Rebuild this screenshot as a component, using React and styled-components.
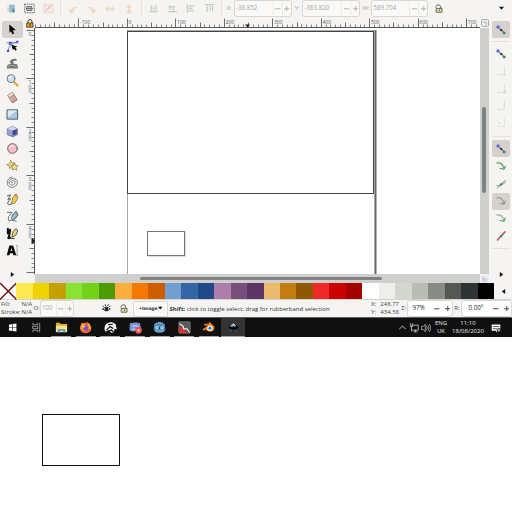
import React from 'react';
import styled, { createGlobalStyle } from 'styled-components';

const Global = createGlobalStyle`
  *{box-sizing:border-box}
  html,body{margin:0;background:#fff;overflow:hidden}
  svg{display:block;flex:none}
`;
const Screen = styled.div`width:512px;height:512px;background:#fff;overflow:hidden;font-family:"Open Sans","Noto Sans",sans-serif;color:#41484c;font-size:6px;line-height:1;`;
const Window = styled.div`height:318px;background:#f5f4f2;display:flex;flex-direction:column;border-bottom:1px solid #5b5f5c;`;
const Toolbar = styled.div`height:18px;flex:none;display:flex;align-items:flex-start;padding:0 2px 0 2px;color:#a5a6a4;`;
const ToolSlot = styled.div`width:18.5px;height:17px;display:grid;place-items:center;opacity:${p => p.$dim || 1};`;
const Divider = styled.div`width:1px;height:17px;margin:0 ${p => p.$gap || 2.8}px;background:#e5e3e0;flex:none;`;
const FieldLabel = styled.span`width:${p => p.$w}px;height:17px;line-height:17px;text-align:center;flex:none;`;
const NumberField = styled.div`width:${p => p.$w}px;height:17px;display:flex;align-items:center;border:1px solid #d9d7d4;border-radius:3px;background:${p => p.$bg || '#faf9f8'};color:${p => p.$ink || '#a5a6a4'};padding-left:${p => p.$pad || 1}px;flex:none;`;
const Value = styled.span`flex:1;white-space:nowrap;font-size:6.2px;`;
const Step = styled.span`width:${p => p.$w || 8}px;height:13px;display:grid;place-items:center;flex:none;border-left:1px solid ${p => p.$rule || '#eceae8'};`;
const Spacer = styled.div`flex:1;`;
const Main = styled.div`height:265px;flex:none;display:grid;grid-template-columns:25px 10px 445px 9px 23px;grid-template-rows:10px 246px 9px;`;
const Toolbox = styled.div`grid-row:1 / 4;display:flex;flex-direction:column;align-items:center;padding-top:3px;`;
const Tool = styled.div`width:21px;height:17px;display:grid;place-items:center;border-radius:2px;background:${p => p.$on ? '#d6d1cd' : 'transparent'};flex:none;`;
const Corner = styled.div`display:grid;place-items:center;`;
const Ruler = styled.div`overflow:hidden;`;
const VRuler = styled.div`grid-column:2;grid-row:2 / 4;overflow:hidden;`;
const Canvas = styled.div`grid-column:3;grid-row:2;position:relative;background:#fff;overflow:hidden;`;
const Shape = styled.div`position:absolute;left:${p => p.$x}px;top:${p => p.$y}px;width:${p => p.$w}px;height:${p => p.$h}px;border:1px solid ${p => p.$c};box-shadow:${p => p.$soft ? '1px 1px 0 #ddd' : 'none'};`;
const PageSheet = styled.div`position:absolute;left:92px;top:2px;width:248px;bottom:0;border:solid #aaa;border-width:1px 1px 0 1px;box-shadow:1px 0 0 #666,2px 0 0 #b4b4b4;`;
const HScroll = styled.div`grid-column:3;grid-row:3;background:#cfcfce;padding:3px 0 0 104.5px;`;
const HThumb = styled.div`width:242px;height:3px;border-radius:2px;background:#7e8280;`;
const VScroll = styled.div`grid-column:4;grid-row:2;background:#cfcfce;padding:79px 0 0 2px;`;
const VThumb = styled.div`width:4px;height:86px;border-radius:2px;background:#7e8280;`;
const SnapBar = styled.div`grid-column:5;grid-row:1 / 4;display:flex;flex-direction:column;align-items:center;padding:3px 0 0 1px;`;
const Snap = styled.div`width:18px;height:17px;display:grid;place-items:center;border-radius:2px;flex:none;background:${p => p.$on ? '#d6d1cd' : 'transparent'};opacity:${p => p.$dim ? .25 : 1};margin-bottom:.4px;`;
const SnapRule = styled.div`width:18px;height:1px;margin:${p => p.$m};background:#e3e0dd;flex:none;`;
const Palette = styled.div`height:17px;flex:none;display:flex;border-bottom:1px solid #d4d3d0;`;
const Swatch = styled.div`width:16.47px;flex:none;background:${p => p.$c};`;
const PaletteMenu = styled.div`flex:1;display:grid;place-items:center;background:#f5f4f2;`;
const Status = styled.div`height:17px;flex:none;display:flex;align-items:center;`;
const Pair = styled.div`width:${p => p.$w}px;height:17px;flex:none;display:grid;grid-template-columns:auto auto;justify-content:space-between;align-content:center;row-gap:1.5px;line-height:7px;padding:0 1px;`;
const Layer = styled.div`width:35px;height:16px;margin-right:1px;border:1px solid #dad8d5;border-radius:2px;background:#faf9f8;display:flex;align-items:center;justify-content:space-between;padding:0 5px;color:#333;font:bold 4.5px "DejaVu Sans",sans-serif;flex:none;`;
const Hint = styled.div`width:201px;flex:none;padding-left:.5px;white-space:nowrap;font-size:6px;color:#30363a;`;
const IconSlot = styled.div`width:18px;height:17px;display:grid;place-items:center;flex:none;`;
const LockSlot = styled(IconSlot)`width:21px;`;
const Taskbar = styled.div`height:19px;background:#101010;display:flex;color:#e8e8e8;`;
const Task = styled.div`width:24.55px;height:19px;display:grid;place-items:center;flex:none;background:${p => p.$open ? 'linear-gradient(#a3a3a3,#a3a3a3) center bottom / ' + (p.$active ? '24px' : '20px') + ' 1px no-repeat' : 'none'} ${p => p.$active ? '#333' : ''};`;
const Tray = styled.div`width:${p => p.$w}px;display:flex;flex-direction:column;align-items:center;justify-content:center;flex:none;gap:1.4px;font-size:6px;line-height:7px;white-space:nowrap;`;
const Notifications = styled.div`width:26px;display:flex;align-items:center;padding-left:4.5px;flex:none;`;
const Below = styled.div`height:175px;padding:77px 0 0 42px;background:#fff;`;
const Outline = styled.div`width:78px;height:52px;border:1px solid #111;`;

const Svg = ({ w = 14, h = 14, vb = '0 0 14 14', children }) => (
  <svg width={w} height={h} viewBox={vb} fill="none" strokeLinecap="round" strokeLinejoin="round">{children}</svg>
);
const Plus = ({ minus }) => <Svg w={5.5} h={5.5} vb="0 0 6 6"><path d={minus ? 'M.5 3h5' : 'M.5 3h5M3 .5v5'} stroke="currentColor" strokeWidth=".9" /></Svg>;
const Caret = ({ d = 'M0 1h6L3 4.5z', w = 5 }) => <Svg w={w} h={w} vb="0 0 6 6"><path d={d} fill="#111" /></Svg>;
const Padlock = () => <Svg w={8} h={9} vb="0 0 8 9"><path d="M2 4V2.6a2 2 0 0 1 4 0V4" stroke="#333" strokeWidth="1" /><rect x="1" y="4" width="6" height="4.2" fill="#f0a31b" stroke="#332e20" strokeWidth=".8" /><path d="M4 5.3v1.5" stroke="#332e20" /></Svg>;
const OpenPadlock = () => <Svg w={8} h={9} vb="0 0 8 9"><path d="M1 3.2V2.6Q1.2.8 3.3.8T5.8 3v1.4" stroke="#555" strokeWidth=".9" /><rect x="1.6" y="4.4" width="5.4" height="3.8" fill="#e6dfae" stroke="#4b4938" strokeWidth=".8" /><path d="M4.3 5.7v1" stroke="#4b4938" strokeWidth=".8" /></Svg>;

function Stepper({ value, $step, $rule, ...field }) {
  return <NumberField {...field}><Value>{value}</Value><Step $w={$step} $rule={$rule}><Plus minus /></Step><Step $w={$step} $rule={$rule}><Plus /></Step></NumberField>;
}

function Horizontal() {
  const ticks = [];
  for (let i = -19; i < 75; i++) {
    const x = Math.round(91.9 + i * 4.846) + .5;
    const len = i % 10 === 0 ? 9 : i % 5 === 0 ? 5 : 3;
    ticks.push(<path key={i} d={`M${x} ${9.5 - len}V9`} stroke={i % 5 ? '#898b8a' : '#6b6e6d'} strokeWidth="1" />);
  }
  return <svg width="445" height="10" viewBox="0 0 445 10">{ticks}<path d="M0 9.5h445" stroke="#55595a" />
    {[-100, 0, 100, 200, 300, 400, 500, 600, 700].map(n => <text key={n} x={93.6 + n * .4846} y="5.8" fontSize="5" fill="#555b5d" fontFamily="Open Sans">{n}</text>)}
    <path d="M210 6.5h5l-2.5 3z" fill="#222" /></svg>;
}
function Vertical() {
  const ticks = [];
  for (let i = 0; i < 51; i++) {
    const y = Math.round(2 + i * 4.846) + .5;
    const len = i % 10 === 0 ? 8 : i % 5 === 0 ? 5 : 3;
    ticks.push(<path key={i} d={`M${9.5 - len} ${y}H10`} stroke={i % 5 ? '#898b8a' : '#6b6e6d'} />);
  }
  return <svg width="10" height="255" viewBox="0 0 10 255">{ticks}<path d="M9.5 0v246" stroke="#55595a" />
    {['0', '100', '200', '300', '400'].map((s, i) => <text key={s} x={[...s].map(() => 3.6).join(' ')} y={[...s].map((_, j) => 8 + i * 48.46 + j * 4.2).join(' ')} fontSize="5" fill="#555b5d" fontFamily="Open Sans">{s}</text>)}
    <path d="M7 210.5v5l3-2.5z" fill="#222" stroke="#222" /></svg>;
}

const tools = [
  <path d="M3.5 1.5l7 6-3.3.5 1.6 3.2-1.9.9-1.5-3.2-1.6 1.6z" fill="#050505" />,
  <><path d="M2 12Q3 4 12 2M1 3h11" stroke="#7580b6" /><path d="M3 2h3v3H3zM1 10.5h2.5V13H1zM11 .8h2.3v2.3H11z" fill="#4a50f4" /><path d="M5.8 5l6.5 2-2.4 1.2 1.8 2-1.6 1.3-1.5-2.2-1.3 1.6z" fill="#080808" /></>,
  <><path d="M1 12.5V9.5q1-2 4-2L4.7 5.5 4 4.5Q6 1 10.8 2l1 2.4-3-.6-1 1.2.4 2.4q4-.5 4.6 2v3.1z" fill="#73756f" /><path d="M2 10q5-2 9.5 0" stroke="#b5b6b2" /></>,
  <><path d="M8.8 8.8l3.7 3.7" stroke="#eda229" strokeWidth="2.3" /><circle cx="5.3" cy="5" r="4.2" fill="#cae2f1" stroke="#6c7275" /><path d="M3.2 4.5q.6-2 2.6-1.8" stroke="#fff" /></>,
  <><path d="M2.2 4.5l4.8-3 5 8-4.8 3z" fill="#c89787" stroke="#754b42" strokeWidth=".8" /><path d="M2.2 4.5l4.8-3 1.3 2-4.9 3z" fill="#eee0d9" /><path d="M5.3 7.5l1.8 2.8M8 5.5l2 3" stroke="#eed0bf" /></>,
  <><rect x="1.5" y="2" width="11" height="10" fill="#a9c7df" stroke="#455564" /><path d="M2.2 2.7h9.6L2.2 10z" fill="#dbeaf4" /></>,
  <><path d="M1.7 4L7 1.5 12.3 4v6.3l-4.8 2.5L1.7 10.5z" fill="#9ba2da" stroke="#646993" strokeWidth=".8" /><path d="M7 5.5l4.6-1.3v5.5L7 11.5z" fill="#43488e" /><path d="M2 4l5-2.3L12 4 7 5.8z" fill="#d9dbed" /></>,
  <><circle cx="7" cy="7" r="5.2" fill="#f7bdca" stroke="#67545a" /><path d="M4.2 5.5Q6 3.3 8 3.8" stroke="#fff" /></>,
  <><path d="M5.2 1.6l1 2.8 3-.4-2 2.3 1.6 2.8-3-.8-2 2.2-.3-3L.8 6.2l2.9-1.1z" fill="#f1e18b" stroke="#847437" strokeWidth=".7" /><path d="M9.5 4.6l.9 2.4 2.7.4-2 1.7.3 3-2.4-1.4-2.6 1.2.6-2.8L5.4 7l2.8-.3z" fill="#f1e18b" stroke="#847437" strokeWidth=".7" /></>,
  <path d="M7.2 7.3q-1.8.5-1.6-1.2c.6-2.5 4-1.7 4 .8 0 4-6.3 4-6.3-.3 0-5.3 8.9-5.5 8.9.5 0 6.5-10.9 7.3-10.9 0 0-3.2 2.2-5.3 5.1-6" stroke="#686969" strokeWidth=".9" />,
  <><path d="M1.5 3L5 2 2 7l3-1-3 4c-1 4 3 3 5 1" stroke="#555" /><path d="M5.8 11l2-7 3-3 2 4.5-3 5z" fill="#f6cb4b" stroke="#68522b" strokeWidth=".7" /><path d="M9 3.3l2-2.1 1.6 3z" fill="#ee7130" /></>,
  <><path d="M1.5 2.5h5L3 7Q1 13 6 11l5 1" stroke="#5e6467" /><path d="M5.8 10L7 5l4-3.7 2 4-3 4z" fill="#7db0cf" stroke="#364a57" strokeWidth=".8" /><path d="M6 10l4-5" stroke="#efd6a3" /></>,
  <><path d="M2 2v5l2.5-4-1 6-1 3 2-.5" stroke="#111" strokeWidth="2.2" /><path d="M5 12.3h4" stroke="#333" /><path d="M6.5 10.5l1-5.5 3-3 2.2 2.2-2 4.5z" fill="#efce76" stroke="#353126" strokeWidth=".8" /><path d="M9.3 3.2L11 1.2l2 2.6z" fill="#4889b4" /></>,
  <><path fillRule="evenodd" d="M3.6 1.6h4.1l3.4 10.6H7.9l-.6-2.2H4.3l-.6 2.2H.8zM5 7.6h1.8L5.8 4z" fill="#090909" /><path d="M12 2.2v9.5M11.3 1.7h1.4M11.3 12.2h1.4" stroke="#888" strokeWidth=".7" /></>,
];
const Nodes = () => <Svg w={12} h={12} vb="0 0 14 14"><path d="M4 4l7 6.5" stroke="#777" strokeWidth="1.2" /><rect x="1.8" y="1.8" width="3.4" height="3.4" rx=".8" fill="#5f63e6" /><rect x="6.2" y="6" width="2.2" height="2.2" fill="#222" /><rect x="9" y="9" width="3.3" height="3.1" rx=".8" fill="#408b60" /></Svg>;
const Bracket = ({ d }) => <Svg w={12} h={12}><path d="M11 2v9H3" stroke="#8c9991" /><path d={d} stroke="#4ba375" strokeWidth="2.3" /></Svg>;
const Curve = ({ c, head = '#46965c' }) => <Svg w={12} h={12}><path d="M2 3.5q7-1 8 6" stroke={c} strokeWidth="1.3" /><path d="M6 10l4.4.8 1.6-3.6" stroke={head} strokeWidth="1.3" /></Svg>;
const Cross = () => <Svg w={12} h={12}><path d="M3 11.5L12 3" stroke="#aaa" strokeWidth="1.5" /><path d="M2 8.5l4 .5 6-3.5" stroke="#91a496" /><path d="M6.4 8l1.2-1" stroke="#318354" strokeWidth="2.2" /></Svg>;
const RedLine = () => <Svg w={12} h={12}><path d="M3 11.5l2-2.2M9.2 4.8l2.3-2.5" stroke="#d9545a" strokeWidth="2" /><path d="M5 9.3l4.2-4.5" stroke="#777" strokeWidth="1.2" /><path d="M6.6 7.7l1-1.1" stroke="#318354" strokeWidth="2.4" /></Svg>;

const colors = 'fce94f edd400 c4a000 8ae234 73d216 4e9a06 fcaf3e f57900 ce5c00 729fcf 3465a4 204a87 ad7fa8 75507b 5c3566 e9b96e c17d11 8f5902 ef2929 cc0000 a40000 ffffff eeeeec d3d7cf babdb6 888a85 555753 2e3436 000000'.split(' ');

const apps = [
  <path d="M2.5 3.4l4-.7v4H2.5zM7.2 2.6l4.8-.7v4.8H7.2zM2.5 7.4h4v4l-4-.7zM7.2 7.4H12v4.8l-4.8-.7z" fill="#fff" />,
  <path d="M2.5 1.5v2h6v-2M2.5 12.5v-2h6v2M2.5 5.5h6v3h-6zM11 1.5v2M11 6v6.5M10.5 4.8h1" stroke="#bbb" strokeWidth=".9" />,
  <><path d="M1 2h4.3l1 1.2h6.7v9H1z" fill="#e7a923" /><path d="M1 5h12v6.8H1z" fill="#ffe08a" /><path d="M3 12.5V8.8h8v3.7H9.2V10.5H4.8v2z" fill="#3298df" /></>,
  <><circle cx="7" cy="7.4" r="5.9" fill="#f45435" /><path d="M3 2L1.4 7q0 5.6 5.9 5.6T13.2 7Q12.2 2.6 8.5.8L10 5z" fill="#ff9d27" /><circle cx="7.2" cy="7.5" r="2.9" fill="#7650d8" /><path d="M3 5l3-.4 1 1-2.3 2z" fill="#f3cf44" /><path d="M1.8 9q4 6 10 .5-2 1.5-5 .9" stroke="#ef3355" /></>,
  <><path d="M.5 9Q.5 3 5 2l3-.8 4.4 2L13.8 9l-2.4-.3-1 4H8l-3-3-3.4 2z" fill="#f0f0f0" /><path d="M3 9.5L6.5 6l3 1.8M4 12l4-2.5L10 12M5 4l4-.5" stroke="#151515" strokeWidth="1.3" /></>,
  <><path d="M1 2.5Q7 .5 11.9 2.5l1.2 7.5L9 11.5 7 10.2l-2.5 1.5L.5 10z" fill="#7b8ed6" /><path d="M4 5.5q3-1 5.5 0M4 8.7q2.5 1 4 0" stroke="#e6ebff" /><circle cx="10.2" cy="10" r="3.6" fill="#e95454" /><circle cx="10.2" cy="10" r="1.2" fill="#fff" /></>,
  <><path d="M1.2 4l2.4-2 1.7 1L6 1h2l.7 2 1.7-1 2.4 2 .5 5.5q-1.2 3.4-6.3 3.4T.8 9.5z" fill="#468bbb" /><path d="M2 4l2-2 1.5 1L6 1.5h2L8.5 3 10 2l2 2" stroke="#8ac1e1" strokeDasharray="1 1" /><circle cx="4.3" cy="7.2" r="1.6" fill="#e6f0f5" /><circle cx="9.7" cy="7.2" r="1.6" fill="#e6f0f5" /><path d="M4.4 7.2h.1M9.6 7.2h.1M7 7v1.4" stroke="#26383e" strokeWidth="1.2" /><path d="M3 10.5h8" stroke="#b9d6e7" strokeWidth=".7" /></>,
  <><rect x=".8" y=".8" width="12.4" height="12.4" rx="1" fill="#565b5c" stroke="#888" strokeWidth=".6" /><path d="M1.5 6l5 3 1.4 3.8H1.5z" fill="#ed302e" /><path d="M2 3.3l3.3 2 .7 3 4 .5 2 3.5" stroke="#f6f6f6" strokeWidth="1.3" /><path d="M9.5 9.8l2 2.8" stroke="#e12929" /></>,
  <><path d="M.5 9.2l5.8-4.4H2.5V3h5.2L7 1.8l1.2-.6 4.3 3.9q2.2 3.5-1.1 5.6-3.2 1.7-6.6-.5L4 9 2 10.4z" fill="#ef8418" /><circle cx="8.5" cy="7.8" r="2.9" fill="#eee" /><circle cx="8.5" cy="7.8" r="1.5" fill="#236eae" /></>,
  <><path d="M7 1L.8 7l1.9 1.7 2 .1-.2 1.6L7 13l2-1.9-.7-1.4 2.8-.5L13.2 7z" fill="#07090a" stroke="#576068" strokeWidth=".5" /><path d="M7 2L3 6l1.4-.3.8 1L7 5l1 1.2 2-.8z" fill="#a9bac9" /><path d="M4 11q3-2 5.5.2" stroke="#3a6281" /></>,
];
const align = ['M2 11h10M4 9V3M7 9V5M10 9V3', 'M2 11h10M4 8V3M2 5h8M8 10V5', 'M3 2v10M5 4h6M5 7h4M5 10h6', 'M2 2h10M4 4v7M8 4v5M11 4v6'];
const turns = ['M5 12q-2-6 6-7M2 8l3 4 3-3', 'M9 12q2-6-6-7M12 8l-3 4-3-3', 'M1.5 7h11M4 4.5L1.5 7 4 9.5M10 4.5L12.5 7 10 9.5', 'M7 1.5v11M4.5 4L7 1.5 9.5 4M4.5 10L7 12.5 9.5 10'];

export default function App() {
  return <><Global /><Screen>
    <Window>
      <Toolbar>
        <ToolSlot $dim={.75}><Svg w={11} h={11}><path d="M4 2h7v10H4z" fill="#73a9cf" /><path d="M2 4h6M2 7h6M2 10h6" stroke="#aaa" /><path d="M8 7h3v5H8z" fill="#356f9b" /></Svg></ToolSlot>
        <ToolSlot><Svg w={11} h={11}><rect x="1" y="1.5" width="12" height="11" stroke="#4b4b4b" strokeDasharray="1 1.8" /><rect x="4" y="4.5" width="6" height="5" fill="#bbb" stroke="#555" /><path d="M3 7h8" stroke="#666" /></Svg></ToolSlot>
        <ToolSlot $dim={.35}><Svg w={11} h={11}><rect x="1" y="1.5" width="12" height="11" stroke="#888" strokeDasharray="1 1.8" /><path d="M3 11l8-8" stroke="#d56" strokeWidth="1.4" /><circle cx="5" cy="5" r="2.5" stroke="#e65" /><circle cx="9" cy="9" r="2.5" stroke="#da5" /></Svg></ToolSlot>
        <Divider />
        {turns.map(d => <ToolSlot key={d} $dim={.35}><Svg w={10} h={10}><path d={d} stroke="#e7a56d" strokeWidth="2.2" /></Svg></ToolSlot>)}
        <Divider />
        {align.map(d => <ToolSlot key={d} $dim={.38}><Svg w={11} h={11}><path d={d} stroke="#888" strokeWidth="1.6" /></Svg></ToolSlot>)}
        <Divider $gap={2.5} />
        <FieldLabel $w={9.3}>X:</FieldLabel><Stepper value="-38.852" $w={58} $step={9} />
        <FieldLabel $w={10.5}>Y:</FieldLabel><Stepper value="-363.820" $w={58} $step={9} />
        <FieldLabel $w={11}>W:</FieldLabel><Stepper value="589.704" $w={57} $step={9} />
        <LockSlot><OpenPadlock /></LockSlot><Spacer /><IconSlot><Caret w={5} /></IconSlot>
      </Toolbar>
      <Main>
        <Toolbox>{tools.map((t, i) => <Tool key={i} $on={i === 0}><Svg w={13} h={13}>{t}</Svg></Tool>)}<Spacer /><Tool><Caret w={5} d="M1 0l4 3-4 3z" /></Tool></Toolbox>
        <Corner><Padlock /></Corner>
        <Ruler><Horizontal /></Ruler>
        <Corner><Svg w={8} h={8} vb="0 0 8 8"><rect x=".5" y=".5" width="7" height="7" rx="1" fill="#eee" stroke="#aaa" /><path d="M3 3h2v3" stroke="#aaa" /></Svg></Corner>
        <SnapBar>
          <Snap $on><Nodes /></Snap><SnapRule $m="3px 0 3px" />
          <Snap><Nodes /></Snap>
          <Snap $dim><Bracket d="M11 11h.1" /></Snap><Snap $dim><Bracket d="M11 10h1M10 11h2" /></Snap><Snap $dim><Bracket d="M11 6h.1" /></Snap><Snap $dim><Bracket d="M5 7h.1" /></Snap>
          <SnapRule $m="4px 0 3px" />
          <Snap $on><Nodes /></Snap><Snap><Curve c="#4da058" /></Snap><Snap><Cross /></Snap><Snap $on><Curve c="#929c94" head="#7d9783" /></Snap><Snap><Curve c="#a1aaa2" /></Snap><Snap><RedLine /></Snap>
          <SnapRule $m="3.5px 0" /><Spacer /><Snap><Caret w={5} d="M1 0l4 3-4 3z" /></Snap>
        </SnapBar>
        <VRuler><Vertical /></VRuler>
        <Canvas>
          <PageSheet />
          <Shape $x={92} $y={3} $w={247} $h={163} $c="#444" /><Shape $x={112} $y={203} $w={38} $h={25} $c="#777" $soft />
        </Canvas>
        <VScroll><VThumb /></VScroll>
        <HScroll><HThumb /></HScroll>
        <Corner><Svg w={8} h={8} vb="0 0 8 8"><rect width="8" height="8" fill="#eee" /><path d="M1 1l6 3-6 3z" fill="#b9e4c1" /><path d="M1 1l3 3-3 3z" fill="#e4bde6" /><path d="M2 7l3-3 2 3z" fill="#bce1ec" /></Svg></Corner>
      </Main>
      <Palette>
        <Swatch $c="#fff"><svg width="17" height="17"><path d="M0 0l16.5 16.5M16.5 0L0 16.5" stroke="#6e1111" strokeWidth="1.5" /></svg></Swatch>
        {colors.map(c => <Swatch key={c} $c={'#' + c} />)}<PaletteMenu><Caret w={5} d="M5 0L1 3l4 3z" /></PaletteMenu>
      </Palette>
      <Status>
        <Pair $w={33}><span>Fill:</span><span>N/A</span><span>Stroke:</span><span>N/A</span></Pair>
        <FieldLabel $w={7}>O:</FieldLabel><Stepper value="100" $w={34} $step={8.5} />
        <Spacer />
        <IconSlot><Svg w={9} h={9}><path d="M1 8Q7 1.5 13 8 7 13.5 1 8zM2.6 4.5L1.5 3M5.5 3l-.5-2M9 3l.6-2M11.5 4.5L12.8 3" stroke="#333" strokeWidth="1.4" /><circle cx="7" cy="8" r="2.8" fill="#222" /></Svg></IconSlot>
        <IconSlot><OpenPadlock /></IconSlot>
        <Layer><span>•Image</span><Caret w={4.5} /></Layer>
        <Hint><b>Shift:</b> click to toggle select; drag for rubberband selection</Hint>
        <Pair $w={30}><span>X:</span><span>248.77</span><span>Y:</span><span>434.58</span></Pair>
        <FieldLabel $w={7}>Z:</FieldLabel><Stepper value="97%" $w={46} $bg="#fff" $ink="#252b2e" $pad={4.5} $step={10.5} $rule="transparent" />
        <FieldLabel $w={8}>R:</FieldLabel><Stepper value="0.00°" $w={51} $bg="#fff" $ink="#252b2e" $pad={6.5} $step={10.5} $rule="transparent" />
      </Status>
    </Window>
    <Taskbar>
      {apps.map((a, i) => <Task key={i} $open={i > 1} $active={i === 9}><Svg w={i > 1 ? 13 : 11} h={i > 1 ? 13 : 11}>{a}</Svg></Task>)}
      <Spacer />
      <Tray $w={12}><Svg w={7} h={7}><path d="M1 10l6-6 6 6" stroke="#eee" strokeWidth="1.6" /></Svg></Tray>
      <Tray $w={12}><Svg w={10} h={10}><path d="M4 3h9v7H4M2 1v4h3V1M3.5 5v6M7 12.5h4M9 10v2" stroke="#ddd" /></Svg></Tray>
      <Tray $w={12}><Svg w={10} h={10}><path d="M1 5h2l3-3v10L3 9H1zM8 5q2 2 0 4M10 3.5q3 3.5 0 7M12 2q4 5 0 10" stroke="#ddd" strokeWidth=".9" /></Svg></Tray>
      <Tray $w={18}><span>ENG</span><span>UK</span></Tray>
      <Tray $w={36}><span>11:10</span><span>18/08/2020</span></Tray>
      <Notifications><Svg w={10} h={10}><path d="M1 2h12v9H9l-2 2v-2H1z" fill="#fff" /><path d="M3 5h8M3 8h5" stroke="#222" /><circle cx="11" cy="10" r="2.5" fill="#aaa" stroke="#222" /></Svg></Notifications>
    </Taskbar>
    <Below><Outline /></Below>
  </Screen></>;
}
